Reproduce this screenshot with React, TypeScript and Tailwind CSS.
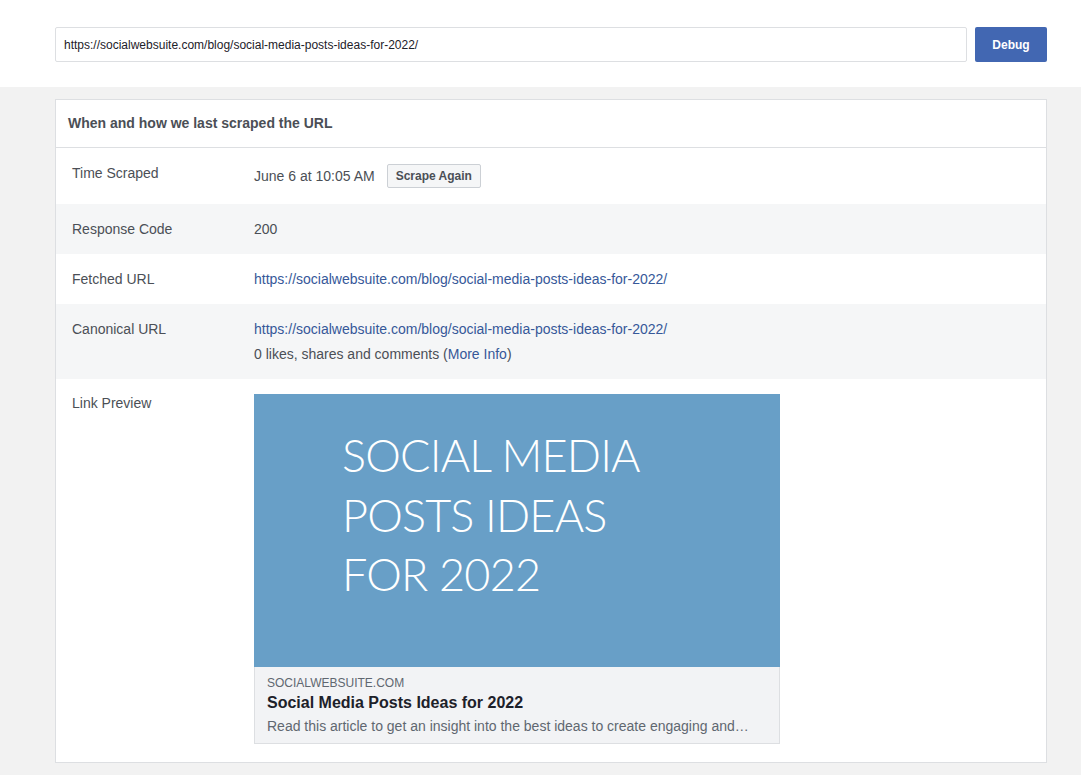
import React, { useState } from 'react';

const url = 'https://socialwebsuite.com/blog/social-media-posts-ideas-for-2022/';

function Row({ label, shaded, children }: { label: string; shaded?: boolean; children: React.ReactNode }) {
  return (
    <div className={`flex px-4 py-4 ${shaded ? 'bg-[#f5f6f7]' : 'bg-white'}`}>
      <div className="w-[182px] shrink-0 text-[14px] leading-[18px] text-[#4b4f56]">{label}</div>
      <div className="flex-1 text-[14px] leading-[18px] text-[#4b4f56]">{children}</div>
    </div>
  );
}

function LinkPreview() {
  return (
    <div className="w-[526px]">
      <div className="h-[273px] bg-[#689fc7] pl-[88px] pt-[32px]">
        <div className="font-['Lato',sans-serif] font-light text-[45px] leading-[59.5px] text-white tracking-[-0.8px]">
          <div>SOCIAL MEDIA</div>
          <div>POSTS IDEAS</div>
          <div>FOR 2022</div>
        </div>
      </div>
      <div className="border border-t-0 border-[#dddfe2] bg-[#f2f3f5] px-3 pt-[8px] pb-[7px]">
        <div className="text-[12px] leading-[16px] text-[#606770]">SOCIALWEBSUITE.COM</div>
        <div className="mt-[2px] text-[16px] leading-[20px] font-bold text-[#1d2129]">Social Media Posts Ideas for 2022</div>
        <div className="mt-[3px] text-[14px] leading-[20px] text-[#606770] whitespace-nowrap">
          Read this article to get an insight into the best ideas to create engaging and…
        </div>
      </div>
    </div>
  );
}

export default function App() {
  const [value, setValue] = useState(url);

  return (
    <div className="h-screen overflow-hidden bg-[#f2f2f2] font-['Liberation_Sans',Arial,sans-serif]">
      <div className="bg-white h-[87px] pl-[55px] pr-[34px] pt-[27px] flex gap-2">
        <input
          value={value}
          onChange={(e) => setValue(e.target.value)}
          className="flex-1 h-[35px] border border-[#dddfe2] rounded-[2px] px-[8px] text-[12px] text-[#1d2129] outline-none"
        />
        <button className="w-[72px] h-[35px] bg-[#4267b2] rounded-[2px] text-white text-[12px] font-bold">Debug</button>
      </div>
      <div className="pl-[55px] pr-[34px] pt-3">
        <div className="bg-white border border-[#dddfe2]">
          <div className="h-[48px] px-3 flex items-center border-b border-[#dddfe2] text-[14px] font-bold text-[#4b4f56]">
            When and how we last scraped the URL
          </div>
          <div className="flex px-4 py-4 bg-white">
            <div className="w-[182px] shrink-0 text-[14px] leading-[18px] text-[#4b4f56]">Time Scraped</div>
            <div className="flex items-center gap-3 text-[14px] text-[#4b4f56]">
              <span>June 6 at 10:05 AM</span>
              <button className="h-[24px] px-2 bg-[#f5f6f7] border border-[#ccd0d5] rounded-[2px] text-[12px] font-bold text-[#4b4f56]">
                Scrape Again
              </button>
            </div>
          </div>
          <Row label="Response Code" shaded>200</Row>
          <Row label="Fetched URL">
            <a className="text-[#365899]">{url}</a>
          </Row>
          <Row label="Canonical URL" shaded>
            <a className="text-[#365899]">{url}</a>
            <div className="mt-[7px]">
              0 likes, shares and comments (<a className="text-[#365899]">More Info</a>)
            </div>
          </Row>
          <div className="flex px-4 pt-[15px] pb-[18px]">
            <div className="w-[182px] shrink-0 text-[14px] leading-[18px] text-[#4b4f56]">Link Preview</div>
            <LinkPreview />
          </div>
        </div>
      </div>
    </div>
  );
}
